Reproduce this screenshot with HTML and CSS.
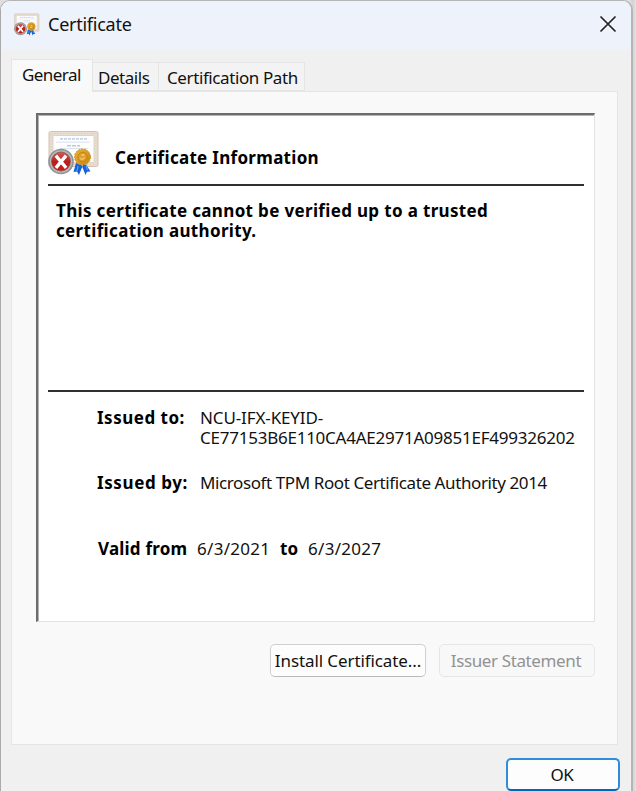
FILE: index.html
```html
<!DOCTYPE html>
<html lang="en">
<head>
<meta charset="utf-8">
<title>Certificate</title>
<link rel="stylesheet" href="styles.css">
</head>
<body>
<svg class="defs" width="0" height="0" aria-hidden="true">
  <defs>
    <linearGradient id="gold" x1="0" y1="0" x2="1" y2="1">
      <stop offset="0" stop-color="#eeb032"/><stop offset="1" stop-color="#c98512"/>
    </linearGradient>
    <linearGradient id="red" x1="0" y1="0" x2="0" y2="1">
      <stop offset="0" stop-color="#d85a55"/><stop offset=".5" stop-color="#b91f1c"/><stop offset="1" stop-color="#cf1c12"/>
    </linearGradient>
    <symbol id="certificate" viewBox="0 0 52 46">
      <rect x="1" y="1.500" width="49" height="35" rx="1.500" fill="#e9dfd2" stroke="#d0c2b2"/>
      <rect x="3" y="3.500" width="45" height="31" fill="none" stroke="#d8cbbb" stroke-dasharray="1.500 1.500"/>
      <rect x="5" y="5.500" width="41" height="27" fill="#fdfdfe" stroke="#dcd3c6"/>
      <path d="M12 8.800h27" stroke="#b3c2db" stroke-width="1.300" stroke-dasharray="3 1"/>
      <path d="M8 12.200h34M12 18.500h28M30 22h10" stroke="#d9e1ef"/>
      <path d="M19 15.800h13" stroke="#bac7dd" stroke-width="1.400" stroke-dasharray="4 1"/>
      <path d="M28 33l-2.500 9 3.500-.5 2 3.500 4-10zM37 33l5.500 8.500-3.500.300-1.500 3.200-4-10z" fill="#1262da"/>
      <path d="M30 36l-1 5M38 36l1.500 4" stroke="#5aa2f3" stroke-width="1.200"/>
      <circle cx="34.500" cy="27" r="8" fill="url(#gold)" stroke="#d29724" stroke-dasharray="2 1"/>
      <circle cx="34.500" cy="27" r="4.600" fill="#dfa12a" stroke="#b97c16" stroke-width=".8"/>
      <path d="M32 28c1 2 4 1.500 4-.5M33.500 25h3" stroke="#ffe0a0" stroke-width="1" fill="none"/>
      <circle cx="13" cy="31.500" r="12.800" fill="#909396"/>
      <circle cx="13" cy="31.500" r="11.200" fill="#b8babc"/>
      <circle cx="13" cy="31.500" r="9.500" fill="url(#red)" stroke="#8f5653" stroke-width=".8"/>
      <path d="M9 27l8 9.500M17 27l-8 9.500" stroke="#fff" stroke-width="3.400" stroke-linecap="square"/>
    </symbol>
  </defs>
</svg>
<div class="window">
  <header class="titlebar">
    <svg class="title-icon"><use href="#certificate"/></svg>
    <h1 class="title">Certificate</h1>
    <svg class="close" viewBox="0 0 18 18"><path d="M1.500 1.500l15 15M16.500 1.500l-15 15"/></svg>
  </header>
  <nav class="tabs">
    <div class="tab active"><span class="t-general">General</span></div>
    <div class="tab"><span class="t-details">Details</span></div>
    <div class="tab wide"><span class="t-path">Certification Path</span></div>
  </nav>
  <main class="page">
    <section class="panel">
      <div class="heading">
        <svg class="cert-icon"><use href="#certificate"/></svg>
        <h2 class="heading-text">Certificate Information</h2>
      </div>
      <p class="status">This certificate cannot be verified up to a trusted<br>certification authority.</p>
      <dl class="fields">
        <dt class="to">Issued to:</dt>
        <dd><span class="key1">NCU-IFX-KEYID-</span><br><span class="key2">CE77153B6E110CA4AE2971A09851EF499326202</span></dd>
        <dt class="by">Issued by:</dt>
        <dd><span class="issuer">Microsoft TPM Root Certificate Authority 2014</span></dd>
      </dl>
      <p class="validity"><b class="from">Valid from</b><span class="date start">6/3/2021</span><b class="until">to</b><span class="date">6/3/2027</span></p>
    </section>
    <div class="actions">
      <button class="button install">Install Certificate...</button>
      <button class="button issuer-statement" disabled>Issuer Statement</button>
    </div>
  </main>
  <footer class="footer"><button class="button ok">OK</button></footer>
</div>
</body>
</html>
```
FILE: styles.css
```css
* { box-sizing: border-box; }
body {
  margin: 0;
  height: 791px;
  overflow: hidden;
  background: linear-gradient(90deg, #dedede 631px, #d0d0d0 632px, #e2e2e2);
  font: 17px/20px "Noto Sans", "DejaVu Sans", sans-serif;
  color: #111;
}
h1, h2, p, dl, dd { margin: 0; font-size: inherit; font-weight: inherit; }
.defs { display: block; height: 0; }
.window {
  width: 633px;
  height: 810px;
  border: 2px solid #b5b5b5;
  border-left: 1px solid #aaa;
  border-top-width: 1px;
  border-radius: 10px;
  background: #f0f0f0;
  overflow: hidden;
}
.titlebar {
  display: flex;
  align-items: center;
  height: 48px;
  padding: 0 14px 2px 13px;
  background: #eef2fb;
}
.title-icon { width: 26px; height: 25px; }
.title { margin-left: 8px; font-size: 18px; letter-spacing: -0.25px; }
.close { width: 18px; height: 18px; margin-left: auto; fill: none; stroke: #222; stroke-width: 1.7; }
.tabs { display: flex; align-items: flex-end; height: 42px; padding-left: 10px; }
.tab {
  height: 29px;
  width: 66px;
  padding: 5px 0 0 5px;
  border: 1px solid #e5e5e5;
  border-left: 0;
  background: #f3f3f3;
  white-space: nowrap;
}
.tab.active {
  position: relative;
  width: 82px;
  height: 33px;
  margin-bottom: -1px;
  padding: 5px 0 0 10px;
  border-left: 1px solid #e5e5e5;
  border-bottom: 0;
  background: #f9f9f9;
}
.tab.wide { width: 146px; padding-left: 8px; }
.t-general { letter-spacing: -0.55px; }
.t-details { letter-spacing: -0.45px; }
.t-path { letter-spacing: -0.4px; }
.page {
  width: 607px;
  height: 654px;
  margin-left: 10px;
  padding: 21px 22px 0 24px;
  border: 1px solid #e5e5e5;
  background: #f9f9f9;
}
.panel {
  width: 559px;
  height: 509px;
  padding: 15px 10px 0;
  border: 2px solid #6c6c6c;
  border-top-color: #6c6c6c;
  border-right: 1px solid #e3e3e3;
  border-bottom: 1px solid #e3e3e3;
  box-shadow: inset 1px 1px #b4b4b4;
  background: #fff;
}
.heading { display: flex; height: 56px; border-bottom: 2px solid #303030; }
.cert-icon { width: 52px; height: 46px; flex: none; }
.heading-text { margin: 18px 0 0 15px; letter-spacing: 0.3px; }
.heading-text, .status, dt, b { font-weight: bold; color: #000; }
.status { height: 206px; padding: 15px 0 0 8px; border-bottom: 2px solid #303030; letter-spacing: 0.34px; }
.fields {
  display: grid;
  grid-template-columns: 103px 1fr;
  grid-template-rows: 65px 65px;
  margin: 16px 0 0 49px;
}
.fields dd, .heading-text, .status { white-space: nowrap; }
.to { letter-spacing: 0.5px; }
.by { letter-spacing: 0.6px; }
.key1 { letter-spacing: -0.12px; }
.key2 { letter-spacing: -0.24px; }
.issuer { letter-spacing: -0.4px; }
.validity { display: flex; margin: 1px 0 0 50px; white-space: nowrap; }
.from { width: 99px; letter-spacing: 0.2px; }
.date { letter-spacing: 0.3px; }
.start { width: 83px; }
.until { width: 28px; }
.actions { display: flex; gap: 13px; justify-content: flex-end; margin-top: 22px; }
.button {
  height: 33px;
  padding: 1px 0 0;
  border: 1px solid #d0d0d0;
  border-bottom-color: #b9b9b9;
  border-radius: 5px;
  background: #fdfdfd;
  color: #111;
  font: inherit;
  white-space: nowrap;
}
.install { width: 156px; letter-spacing: -0.1px; }
.issuer-statement { width: 156px; padding-right: 2px; border-color: #e6e6e6; background: #f8f8f8; color: #929292; letter-spacing: -0.38px; }
.footer { display: flex; justify-content: flex-end; padding: 13px 11px 0 0; }
.ok { width: 114px; padding-right: 2px; border: 2px solid #2f8ddb; border-bottom-color: #0067c0; letter-spacing: -0.5px; }
```
